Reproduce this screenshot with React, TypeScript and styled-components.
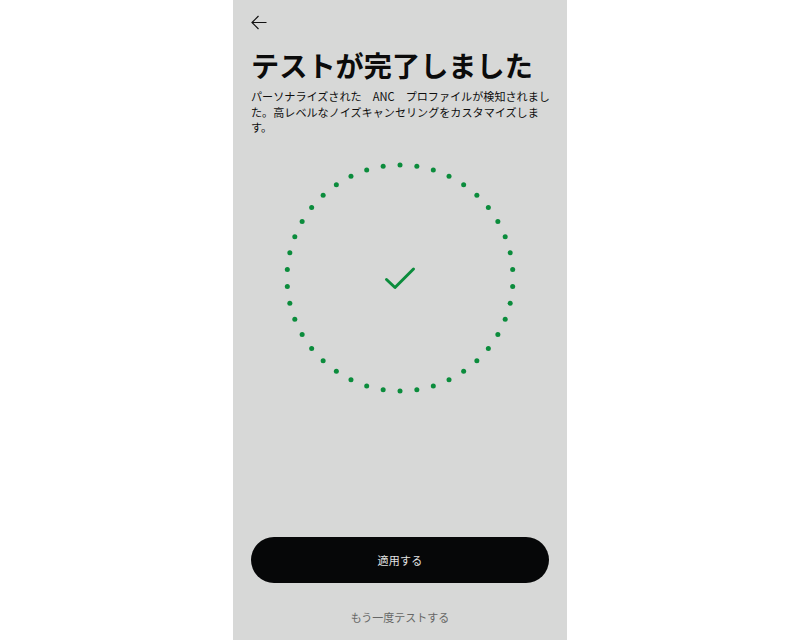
import React from 'react';
import styled, { createGlobalStyle } from 'styled-components';

const GlobalStyle = createGlobalStyle`
    html, body {
        margin: 0;
        padding: 0;
        background: #ffffff;
    }
    body {
        font-family: "Noto Sans CJK JP", "Noto Sans", sans-serif;
    }
`;

const Page = styled.div`
    width: 800px;
    height: 640px;
    display: flex;
    justify-content: center;
    background: #ffffff;
`;

const Screen = styled.div`
    width: 334px;
    height: 640px;
    background: #d7d8d7;
    display: flex;
    flex-direction: column;
    padding: 15px 18px 15px;
    box-sizing: border-box;
`;

const BackButton = styled.button`
    width: 16px;
    height: 15px;
    padding: 0;
    border: none;
    background: none;
    display: flex;
    color: #111;
`;

const Title = styled.h1`
    margin: 17px 0 0;
    font-size: 28.2px;
    line-height: 36px;
    font-weight: 700;
    color: #0b0b0b;
    white-space: nowrap;
`;

const Description = styled.p`
    margin: 6px 0 0;
    font-size: 11.1px;
    line-height: 15.5px;
    font-weight: 400;
    color: #0e0e0e;
    white-space: nowrap;
`;

const RingWrap = styled.div`
    margin-top: 22px;
    display: flex;
    justify-content: center;
`;

const Footer = styled.div`
    margin-top: auto;
    display: flex;
    flex-direction: column;
    align-items: center;
`;

const PrimaryButton = styled.button`
    width: 100%;
    height: 46px;
    border: none;
    border-radius: 23px;
    background: #060708;
    color: #e2e2e2;
    font-family: inherit;
    font-size: 11px;
    letter-spacing: 0.3px;
`;

const TextButton = styled.button`
    margin-top: 26px;
    border: none;
    background: none;
    padding: 0;
    font-family: inherit;
    font-size: 11px;
    line-height: 16px;
    color: #666766;
`;

const GREEN = '#0b8c3c';

function DottedRing() {
    const count = 42;
    const r = 113;
    const c = 120;
    const dots = Array.from({ length: count }, (_, i) => {
        const a = (i / count) * Math.PI * 2;
        return { x: c + r * Math.sin(a), y: c - r * Math.cos(a) };
    });
    return (
        <svg width="240" height="240" viewBox="0 0 240 240">
            {dots.map((d, i) => (
                <circle key={i} cx={d.x} cy={d.y} r="2.5" fill={GREEN} />
            ))}
            <path
                d="M106.5 121.5 L115 129.5 L133.5 111"
                fill="none"
                stroke={GREEN}
                strokeWidth="3"
                strokeLinecap="round"
                strokeLinejoin="round"
            />
        </svg>
    );
}

export default function App() {
    return (
        <Page>
            <GlobalStyle />
            <Screen>
                <BackButton aria-label="back">
                    <svg width="16" height="15" viewBox="0 0 16 15">
                        <path
                            d="M15.5 7.5 H1 M7.5 1 L1 7.5 L7.5 14"
                            fill="none"
                            stroke="currentColor"
                            strokeWidth="1.2"
                        />
                    </svg>
                </BackButton>
                <Title>テストが完了しました</Title>
                <Description>
                    パーソナライズされた　ANC　プロファイルが検知されまし
                    <br />
                    た。高レベルなノイズキャンセリングをカスタマイズしま
                    <br />
                    す。
                </Description>
                <RingWrap>
                    <DottedRing />
                </RingWrap>
                <Footer>
                    <PrimaryButton>適用する</PrimaryButton>
                    <TextButton>もう一度テストする</TextButton>
                </Footer>
            </Screen>
        </Page>
    );
}
